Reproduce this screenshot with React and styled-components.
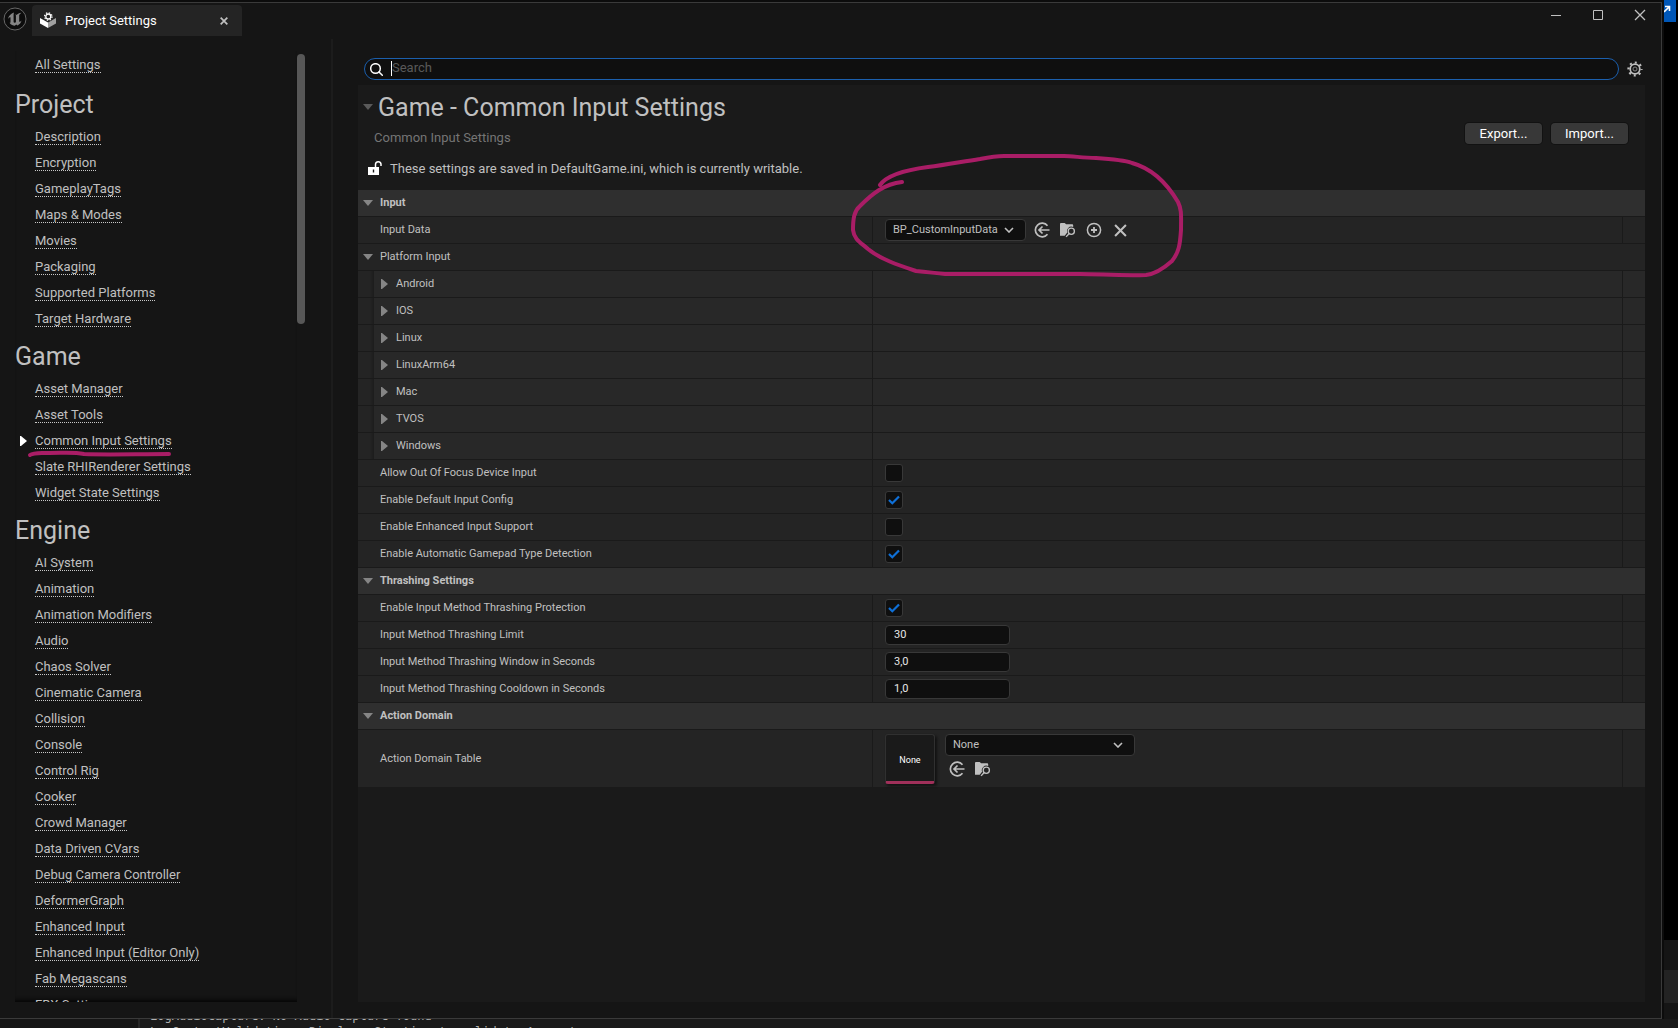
import React, { useState } from 'react';
import styled, { createGlobalStyle, css } from 'styled-components';

const GlobalStyle = createGlobalStyle`
	* {
		box-sizing: border-box;
	}

	body {
		margin: 0;
		background: #000;
		color: #c0c0c0;
		font-family: Roboto, sans-serif;
		font-size: 13px;
	}

	button, input, select {
		font-family: inherit;
	}
`;

const NAV = [
	{
		title: 'Project',
		links: ['Description', 'Encryption', 'GameplayTags', 'Maps & Modes', 'Movies', 'Packaging', 'Supported Platforms', 'Target Hardware']
	},
	{
		title: 'Game',
		links: ['Asset Manager', 'Asset Tools', 'Common Input Settings', 'Slate RHIRenderer Settings', 'Widget State Settings']
	},
	{
		title: 'Engine',
		links: [
			'AI System', 'Animation', 'Animation Modifiers', 'Audio', 'Chaos Solver', 'Cinematic Camera', 'Collision', 'Console',
			'Control Rig', 'Cooker', 'Crowd Manager', 'Data Driven CVars', 'Debug Camera Controller', 'DeformerGraph',
			'Enhanced Input', 'Enhanced Input (Editor Only)', 'Fab Megascans', 'FBX Settings'
		]
	}
];

const PLATFORMS = ['Android', 'IOS', 'Linux', 'LinuxArm64', 'Mac', 'TVOS', 'Windows'];

const INPUT_FLAGS = [
	{ id: 'focus', label: 'Allow Out Of Focus Device Input', on: false },
	{ id: 'config', label: 'Enable Default Input Config', on: true },
	{ id: 'enhanced', label: 'Enable Enhanced Input Support', on: false },
	{ id: 'gamepad', label: 'Enable Automatic Gamepad Type Detection', on: true }
];

const THRASHING = [
	{ id: 'limit', label: 'Input Method Thrashing Limit', value: '30' },
	{ id: 'window', label: 'Input Method Thrashing Window in Seconds', value: '3,0' },
	{ id: 'cooldown', label: 'Input Method Thrashing Cooldown in Seconds', value: '1,0' }
];

/* desktop and window frame */

const Desktop = styled.div`
	position: relative;
	display: grid;
	grid-template-columns: minmax(0, 1fr) 16px;
	grid-template-rows: minmax(0, 1fr) 9px;
	height: 100vh;
	overflow: hidden;
`;

const Window = styled.div`
	display: flex;
	flex-direction: column;
	min-height: 0;
	margin-top: 2px;
	border: solid #3a3a3a;
	border-width: 1px 1px 1px 0;
	background: #151515;
	box-shadow: 0 0 0 2px #0c0c0c;
`;

const DesktopEdge = styled.div`
	display: flex;
	flex-direction: column;
	padding-left: 2px;
`;

const EdgeBadge = styled.div`
	height: 22px;
	width: 12px;
	background: #0057b8;
`;

const EdgeBar = styled.div`
	height: ${({ $h }) => $h}px;
	background: ${({ $light }) => ($light ? '#232323' : '#151515')};
`;

const EdgeGap = styled.div`
	flex: 1;
`;

const LogStrip = styled.div`
	grid-column: 1 / -1;
	display: flex;
	overflow: hidden;
	background: #1a1a1a;
`;

const LogGutter = styled.div`
	width: 140px;
	border-right: 2px solid #262626;
	background: #151515;
`;

const LogLines = styled.div`
	display: flex;
	flex-direction: column;
	justify-content: center;
	padding-left: 10px;
	color: #b0b0b0;
	font: 12px/16px "DejaVu Sans Mono", monospace;
	white-space: pre;
`;

const TitleBar = styled.header`
	display: flex;
	height: 36px;
`;

const Logo = styled.div`
	width: 32px;
	padding: 4px 0 0 3px;
`;

const Tab = styled.div`
	display: flex;
	align-items: center;
	width: 210px;
	height: 31px;
	margin-top: 2px;
	padding: 0 12px 0 8px;
	border-radius: 4px 4px 0 0;
	background: #242424;
	color: #fff;
`;

const TabTitle = styled.span`
	flex: 1;
	padding-left: 9px;
`;

const PlainButton = styled.button`
	display: flex;
	align-items: center;
	justify-content: center;
	width: ${({ $w }) => $w || 16}px;
	height: ${({ $h }) => $h || 16}px;
	padding: 0;
	border: 0;
	background: none;
	color: #c0c0c0;
`;

const WindowButtons = styled.div`
	display: flex;
	margin-left: auto;
	align-items: flex-start;
	padding-top: 3px;
`;

/* sidebar */

const Body = styled.div`
	display: flex;
	flex: 1;
	min-height: 0;
`;

const Sidebar = styled.aside`
	display: flex;
	width: 333px;
	padding: 12px 26px 16px 15px;
	border-right: 2px solid #1c1c1c;
`;

const Nav = styled.nav`
	flex: 1;
	min-height: 0;
	padding-top: 1px;
	overflow: hidden;
	box-shadow: inset 0 -5px 4px -3px #050505;
`;

const NavTitle = styled.h2`
	margin: 0;
	height: 44px;
	color: #c0c0c0;
	font-size: 25px;
	font-weight: 400;
	line-height: 50px;
`;

const NavItem = styled.div`
	display: flex;
	align-items: center;
	height: 26px;
	margin-bottom: ${({ $gap }) => ($gap ? 2 : 0)}px;
`;

const Marker = styled.span`
	display: flex;
	width: 20px;
	padding-left: 5px;
`;

const NavLink = styled.a`
	border-bottom: 1px dotted #c8c8c8;
	color: #c0c0c0;
	line-height: 14px;
	text-decoration: none;
	white-space: nowrap;
`;

const ScrollThumb = styled.div`
	width: 8px;
	height: 270px;
	margin-top: 3px;
	border-radius: 4px;
	background: #575757;
`;

/* details */

const Main = styled.main`
	display: flex;
	flex: 1;
	flex-direction: column;
	min-width: 0;
	padding: 19px 16px 16px 25px;
`;

const SearchRow = styled.div`
	display: flex;
	align-items: center;
	gap: 8px;
	height: 22px;
	margin-bottom: 5px;
	padding: 0 2px 0 6px;
`;

const SearchBox = styled.label`
	display: flex;
	flex: 1;
	align-items: center;
	gap: 8px;
	height: 22px;
	padding: 0 12px 0 5px;
	border: 1px solid #1b5fad;
	border-radius: 11px;
	background: #0f0f0f;
`;

const Caret = styled.span`
	width: 1px;
	height: 15px;
	margin: -2px -8px 0 0;
	background: #fff;
`;

const SearchInput = styled.input`
	flex: 1;
	height: 18px;
	padding: 0 0 3px;
	border: 0;
	outline: 0;
	background: none;
	color: #c0c0c0;
	font-size: 13px;

	&::placeholder {
		color: #595959;
		opacity: 1;
	}
`;

const Panel = styled.section`
	flex: 1;
	min-height: 0;
	background: #1a1a1a;
`;

const PanelHead = styled.div`
	display: flex;
	justify-content: space-between;
	height: 105px;
	padding-right: 17px;
`;

const HeadTitle = styled.h1`
	display: flex;
	align-items: center;
	gap: 5px;
	height: 44px;
	margin: 0;
	padding-left: 5px;
	color: #c0c0c0;
	font-size: 25px;
	font-weight: 400;
`;

const HeadSub = styled.p`
	margin: 0;
	padding-left: 16px;
	color: #757575;
	line-height: 18px;
`;

const HeadNote = styled.p`
	display: flex;
	align-items: center;
	gap: 8px;
	height: 18px;
	margin: 12px 0 0;
	padding-left: 10px;
`;

const HeadActions = styled.div`
	display: flex;
	gap: 9px;
	padding-top: 38px;
`;

const ActionButton = styled.button`
	width: 77px;
	height: 21px;
	padding: 0 0 1px;
	border: 0;
	border-radius: 4px;
	background: #383838;
	box-shadow: 0 0 0 1px #121212;
	color: #fff;
	font-size: 13px;
`;

const Category = styled.h3`
	display: flex;
	align-items: center;
	gap: 7px;
	height: 27px;
	margin: 0;
	padding: 0 0 1px 5px;
	border-bottom: 1px solid #1a1a1a;
	background: #2f2f2f;
	color: #c0c0c0;
	font-size: 11px;
	font-weight: 700;
`;

const NameCell = styled.div`
	display: flex;
	align-items: center;
	gap: ${({ $nested }) => ($nested ? 8 : 7)}px;
	padding: 0 0 1px ${({ $indent }) => $indent || 5}px;
`;

const ValueCell = styled.div`
	display: flex;
	align-items: center;
	gap: 8px;
	padding-left: 12px;
	border-left: ${({ $open }) => ($open ? 0 : 1)}px solid #1a1a1a;
`;

const ResetCell = styled.div`
	border-left: ${({ $open }) => ($open ? 0 : 1)}px solid #1a1a1a;
`;

const Row = styled.div`
	display: grid;
	grid-template-columns: 514px minmax(0, 1fr) 23px;
	height: 27px;
	border-bottom: 1px solid #1a1a1a;
	background: #242424;
	font-size: 11px;

	${({ $nested }) => $nested && css`
		background: linear-gradient(90deg, #242424 12px, #1c1c1c 16px, #282828 16px);
	`}

	${({ $tall }) => $tall && css`
		height: 58px;

		${ValueCell} {
			align-items: flex-start;
			gap: 10px;
			padding-top: 4px;
		}
	`}
`;

const SelectWrap = styled.div`
	display: grid;
	align-items: center;
	width: ${({ $w }) => $w}px;

	> * {
		grid-area: 1 / 1;
	}

	> svg {
		justify-self: end;
		margin-right: 12px;
		pointer-events: none;
	}
`;

const Select = styled.select`
	appearance: none;
	width: 100%;
	height: 22px;
	padding: 0 0 1px 7px;
	border: 1px solid #383838;
	border-radius: 4px;
	background: #0f0f0f;
	color: #c0c0c0;
	font-size: 11px;
`;

const CheckWrap = styled.span`
	display: grid;
	place-items: center;

	> * {
		grid-area: 1 / 1;
	}

	> svg {
		pointer-events: none;
	}
`;

const CheckInput = styled.input`
	appearance: none;
	width: 18px;
	height: 18px;
	margin: 0;
	border: 1px solid #383838;
	border-radius: 3px;
	background: #0f0f0f;
`;

const NumberInput = styled.input`
	width: 125px;
	height: 20px;
	padding: 0 8px 1px;
	border: 1px solid #383838;
	border-radius: 4px;
	background: #0f0f0f;
	color: #e6e6e6;
	font-size: 11px;
`;

const Thumb = styled.div`
	display: flex;
	align-items: center;
	justify-content: center;
	width: 50px;
	height: 50px;
	padding-top: 4px;
	border: 1px solid #303030;
	border-bottom: 3px solid #a0305a;
	border-radius: 3px;
	background: #1a1a1a;
	box-shadow: 2px 2px 3px #111;
	color: #fff;
	font-size: 9px;
`;

const AssetPicker = styled.div`
	display: flex;
	flex-direction: column;
	gap: 5px;
`;

const IconRow = styled.div`
	display: flex;
	gap: 10px;
	padding-left: ${({ $indent }) => $indent || 0}px;
`;

/* marker-pen scribbles lie over the window */
const Scribble = styled.svg`
	position: absolute;
	left: ${({ $x }) => $x}px;
	top: ${({ $y }) => $y}px;
	pointer-events: none;
	fill: none;
	stroke: #a91d66;
	stroke-width: 4;
	stroke-linecap: round;
	stroke-linejoin: round;
`;

const ArrowDown = ({ color = '#858585' }) => (
	<svg width="10" height="6" viewBox="0 0 10 6"><path d="M0 0h10L5 6z" fill={color} /></svg>
);

const ArrowRight = ({ color = '#858585' }) => (
	<svg width="7" height="10" viewBox="0 0 7 10"><path d="M0 0h1l6 5-6 5H0z" fill={color} /></svg>
);

const Chevron = () => (
	<svg width="10" height="6" viewBox="0 0 10 6"><path d="M1 1l4 4 4-4" fill="none" stroke="#c0c0c0" strokeWidth="1.6" /></svg>
);

const UnrealLogo = () => (
	<svg width="24" height="24" viewBox="0 0 24 24">
		<circle cx="12" cy="12" r="11" fill="#0c0c0c" stroke="#686868" />
		<path d="M11 5.500C8 6.500 5.500 9 5 12c1-1.500 2-2 2.500-1.500V15c0 .8-.4 1-1 .8 1.500 2.200 3.500 3 5.300 3l1.400-1.400 1.300 1.100c2-1 3.600-2.700 4-5-1 1.100-1.700 1.500-2.300 1V8c.6-1 1.500-1.800 2.200-2.300-2 .2-3.800 1.100-4.900 2.300-.3-.3-.8-.4-1.200-.4.5.4.6.8.6 1.300v6.300c-.6.6-2 .8-2.300-.2V8c0-1 .1-1.800.4-2.500z" fill="#858585" />
	</svg>
);

const ProjectIcon = () => (
	<svg width="16" height="17" viewBox="0 0 16 17">
		<path d="M0 6l8 4.500V16l-8-4.500z" fill="#fff" />
		<path d="M16 6l-8 4.500V16l8-4.500z" fill="#a0a0a0" />
		<circle cx="8.300" cy="4.500" r="4.900" fill="#242424" />
		<circle cx="8.300" cy="4.500" r="2.500" fill="none" stroke="#fff" strokeWidth="1.300" />
		<circle cx="8.300" cy="4.500" r="3.700" fill="none" stroke="#fff" strokeWidth="1.300" strokeDasharray="1.400 1.506" />
	</svg>
);

const SearchIcon = () => (
	<svg width="13" height="13" viewBox="0 0 13 13" fill="none" stroke="#fff" strokeWidth="1.500" strokeLinecap="round">
		<circle cx="5.500" cy="5.500" r="4.800" />
		<path d="M9 9l3.300 3.300" />
	</svg>
);

const GearIcon = () => (
	<svg width="16" height="16" viewBox="0 0 16 16" fill="none" stroke="#c0c0c0">
		<circle cx="8" cy="8" r="4.800" strokeWidth="1.700" />
		<circle cx="8" cy="8" r="6.500" strokeWidth="2.200" strokeDasharray="2 3.105" strokeDashoffset="1" />
		<circle cx="8" cy="8" r="2" stroke="#858585" />
	</svg>
);

const UnlockIcon = () => (
	<svg width="14" height="14" viewBox="0 0 14 14">
		<path d="M7.500 6V3.500a2.700 2.700 0 0 1 5.500 0V5" fill="none" stroke="#fff" strokeWidth="1.500" />
		<path d="M0 6h11v8H0z" fill="#fff" />
		<path d="M4.800 8.500h1.400v3H4.800z" fill="#1a1a1a" />
	</svg>
);

const UseIcon = () => (
	<svg width="16" height="16" viewBox="0 0 16 16" fill="none" stroke="#c0c0c0" strokeWidth="1.700">
		<path d="M13.500 3.800a6.800 6.800 0 1 0 0 8.400M15.500 8H5M8.500 4.500L5 8l3.500 3.500" />
	</svg>
);

const BrowseIcon = () => (
	<svg width="17" height="16" viewBox="0 0 17 16">
		<path d="M0 1.500Q0 .5 1 .5h4l1.500 1.500H13Q14 2 14 3v1.800a4.900 4.900 0 0 0-6.500 6.200L5 14H0z" fill="#c0c0c0" />
		<circle cx="12" cy="9.300" r="3.300" fill="none" stroke="#c0c0c0" strokeWidth="1.400" />
		<path d="M9.700 11.700L6.500 15.300" stroke="#c0c0c0" strokeWidth="1.500" />
	</svg>
);

const AddIcon = () => (
	<svg width="16" height="16" viewBox="0 0 16 16" fill="none" stroke="#c0c0c0" strokeWidth="1.500">
		<circle cx="8" cy="8" r="6.600" />
		<path d="M8 5v6M5 8h6" strokeWidth="1.800" />
	</svg>
);

const CloseIcon = ({ size = 13, weight = 1.9 }) => (
	<svg width={size} height={size} viewBox="0 0 12 12" fill="none" stroke="currentColor" strokeWidth={weight}>
		<path d="M1 1l10 10M11 1L1 11" />
	</svg>
);

const CheckMark = () => (
	<svg width="12" height="10" viewBox="0 0 12 10"><path d="M1 5l3.300 3.300L11 1.500" fill="none" stroke="#0f70d8" strokeWidth="2.200" /></svg>
);

const Check = ({ id, on }) => {
	const [checked, setChecked] = useState(on);

	return (
		<CheckWrap>
			<CheckInput type="checkbox" id={id} checked={checked} onChange={() => setChecked(!checked)} />
			{checked && <CheckMark />}
		</CheckWrap>
	);
};

const Property = ({ id, label, tall, children }) => (
	<Row $tall={tall}>
		<NameCell $indent={22}><label htmlFor={id}>{label}</label></NameCell>
		<ValueCell>{children}</ValueCell>
		<ResetCell />
	</Row>
);

const SideNav = () => (
	<Sidebar>
		<Nav>
			<NavItem $gap><Marker /><NavLink href="#all">All Settings</NavLink></NavItem>
			{NAV.map(({ title, links }) => (
				<div key={title}>
					<NavTitle>{title}</NavTitle>
					{links.map((link) => (
						<NavItem key={link}>
							<Marker>{link === 'Common Input Settings' && <ArrowRight color="#fff" />}</Marker>
							<NavLink href="#section">{link}</NavLink>
						</NavItem>
					))}
				</div>
			))}
		</Nav>
		<ScrollThumb />
	</Sidebar>
);

const Details = () => (
	<Panel>
		<PanelHead>
			<div>
				<HeadTitle><ArrowDown color="#5a5a5a" />Game - Common Input Settings</HeadTitle>
				<HeadSub>Common Input Settings</HeadSub>
				<HeadNote><UnlockIcon />These settings are saved in DefaultGame.ini, which is currently writable.</HeadNote>
			</div>
			<HeadActions>
				<ActionButton>Export...</ActionButton>
				<ActionButton>Import...</ActionButton>
			</HeadActions>
		</PanelHead>

		<Category><ArrowDown />Input</Category>
		<Property id="input-data" label="Input Data">
			<SelectWrap $w={141}>
				<Select id="input-data"><option>BP_CustomInputData</option></Select>
				<Chevron />
			</SelectWrap>
			<IconRow>
				<PlainButton aria-label="Use selected asset"><UseIcon /></PlainButton>
				<PlainButton aria-label="Browse to asset"><BrowseIcon /></PlainButton>
				<PlainButton aria-label="Create asset"><AddIcon /></PlainButton>
				<PlainButton aria-label="Clear"><CloseIcon /></PlainButton>
			</IconRow>
		</Property>
		<Row>
			<NameCell><ArrowDown />Platform Input</NameCell>
			<ValueCell $open />
			<ResetCell $open />
		</Row>
		{PLATFORMS.map((name) => (
			<Row key={name} $nested>
				<NameCell $nested $indent={23}><ArrowRight />{name}</NameCell>
				<ValueCell />
				<ResetCell />
			</Row>
		))}
		{INPUT_FLAGS.map(({ id, label, on }) => (
			<Property key={id} id={id} label={label}><Check id={id} on={on} /></Property>
		))}

		<Category><ArrowDown />Thrashing Settings</Category>
		<Property id="protection" label="Enable Input Method Thrashing Protection"><Check id="protection" on /></Property>
		{THRASHING.map(({ id, label, value }) => (
			<Property key={id} id={id} label={label}><NumberInput id={id} defaultValue={value} /></Property>
		))}

		<Category><ArrowDown />Action Domain</Category>
		<Property id="domain" label="Action Domain Table" tall>
			<Thumb>None</Thumb>
			<AssetPicker>
				<SelectWrap $w={190}>
					<Select id="domain"><option>None</option></Select>
					<Chevron />
				</SelectWrap>
				<IconRow $indent={4}>
					<PlainButton aria-label="Use selected asset"><UseIcon /></PlainButton>
					<PlainButton aria-label="Browse to asset"><BrowseIcon /></PlainButton>
				</IconRow>
			</AssetPicker>
		</Property>
	</Panel>
);

const App = () => (
	<Desktop>
		<GlobalStyle />
		<Window>
			<TitleBar>
				<Logo><UnrealLogo /></Logo>
				<Tab>
					<ProjectIcon />
					<TabTitle>Project Settings</TabTitle>
					<PlainButton $w={12} aria-label="Close tab"><CloseIcon size={8} weight={2.6} /></PlainButton>
				</Tab>
				<WindowButtons>
					<PlainButton $w={42} $h={18} aria-label="Minimize">
						<svg width="10" height="1"><path d="M0 0h10v1H0z" fill="#c0c0c0" /></svg>
					</PlainButton>
					<PlainButton $w={42} $h={18} aria-label="Maximize">
						<svg width="10" height="10"><path d="M.5.5h9v9h-9z" fill="none" stroke="#c0c0c0" /></svg>
					</PlainButton>
					<PlainButton $w={42} $h={18} aria-label="Close"><CloseIcon size={12} weight={1.3} /></PlainButton>
				</WindowButtons>
			</TitleBar>
			<Body>
				<SideNav />
				<Main>
					<SearchRow>
						<SearchBox>
							<SearchIcon />
							<Caret />
							<SearchInput type="text" placeholder="Search" aria-label="Search" />
						</SearchBox>
						<PlainButton aria-label="Settings"><GearIcon /></PlainButton>
					</SearchRow>
					<Details />
				</Main>
			</Body>
		</Window>
		<DesktopEdge>
			<EdgeBadge>
				<svg width="12" height="22" viewBox="0 0 12 22"><path d="M0 12l5-5M1 6.500h4.500V11" fill="none" stroke="#fff" strokeWidth="1.600" /></svg>
			</EdgeBadge>
			<EdgeGap />
			<EdgeBar $h={30} />
			<EdgeBar $h={33} $light />
			<EdgeBar $h={16} />
		</DesktopEdge>
		<LogStrip>
			<LogGutter />
			<LogLines>
				<span>LogAudioCapture: No Audio Capture found</span>
				<span>LogContentValidation: Display: Starting to validate 4 assets</span>
			</LogLines>
		</LogStrip>
		<Scribble $x={850} $y={150} width="336" height="130">
			<path d="M30 35C37 25 55 20 78 17C96 15 110 12 130 9C140 7 148 6 154 6H214C224 6 232 8 246 8C262 9 274 10 282 13C304 19 318 35 328 52C332 60 331 67 331 80C330 95 329 102 322 111C313 119 305 124 296 125C270 126 250 124 230 124H95C84 123 78 122 66 121C48 115 30 109 18 99C10 92 4 89 3 80C3 69 4 61 10 56C22 44 34 34 52 32" />
		</Scribble>
		<Scribble $x={26} $y={448} width="150" height="12">
			<path d="M4 7C8 4 14 5 24 5C38 5 48 4 58 6C80 7 110 6 143 6" />
		</Scribble>
	</Desktop>
);

export default App;
